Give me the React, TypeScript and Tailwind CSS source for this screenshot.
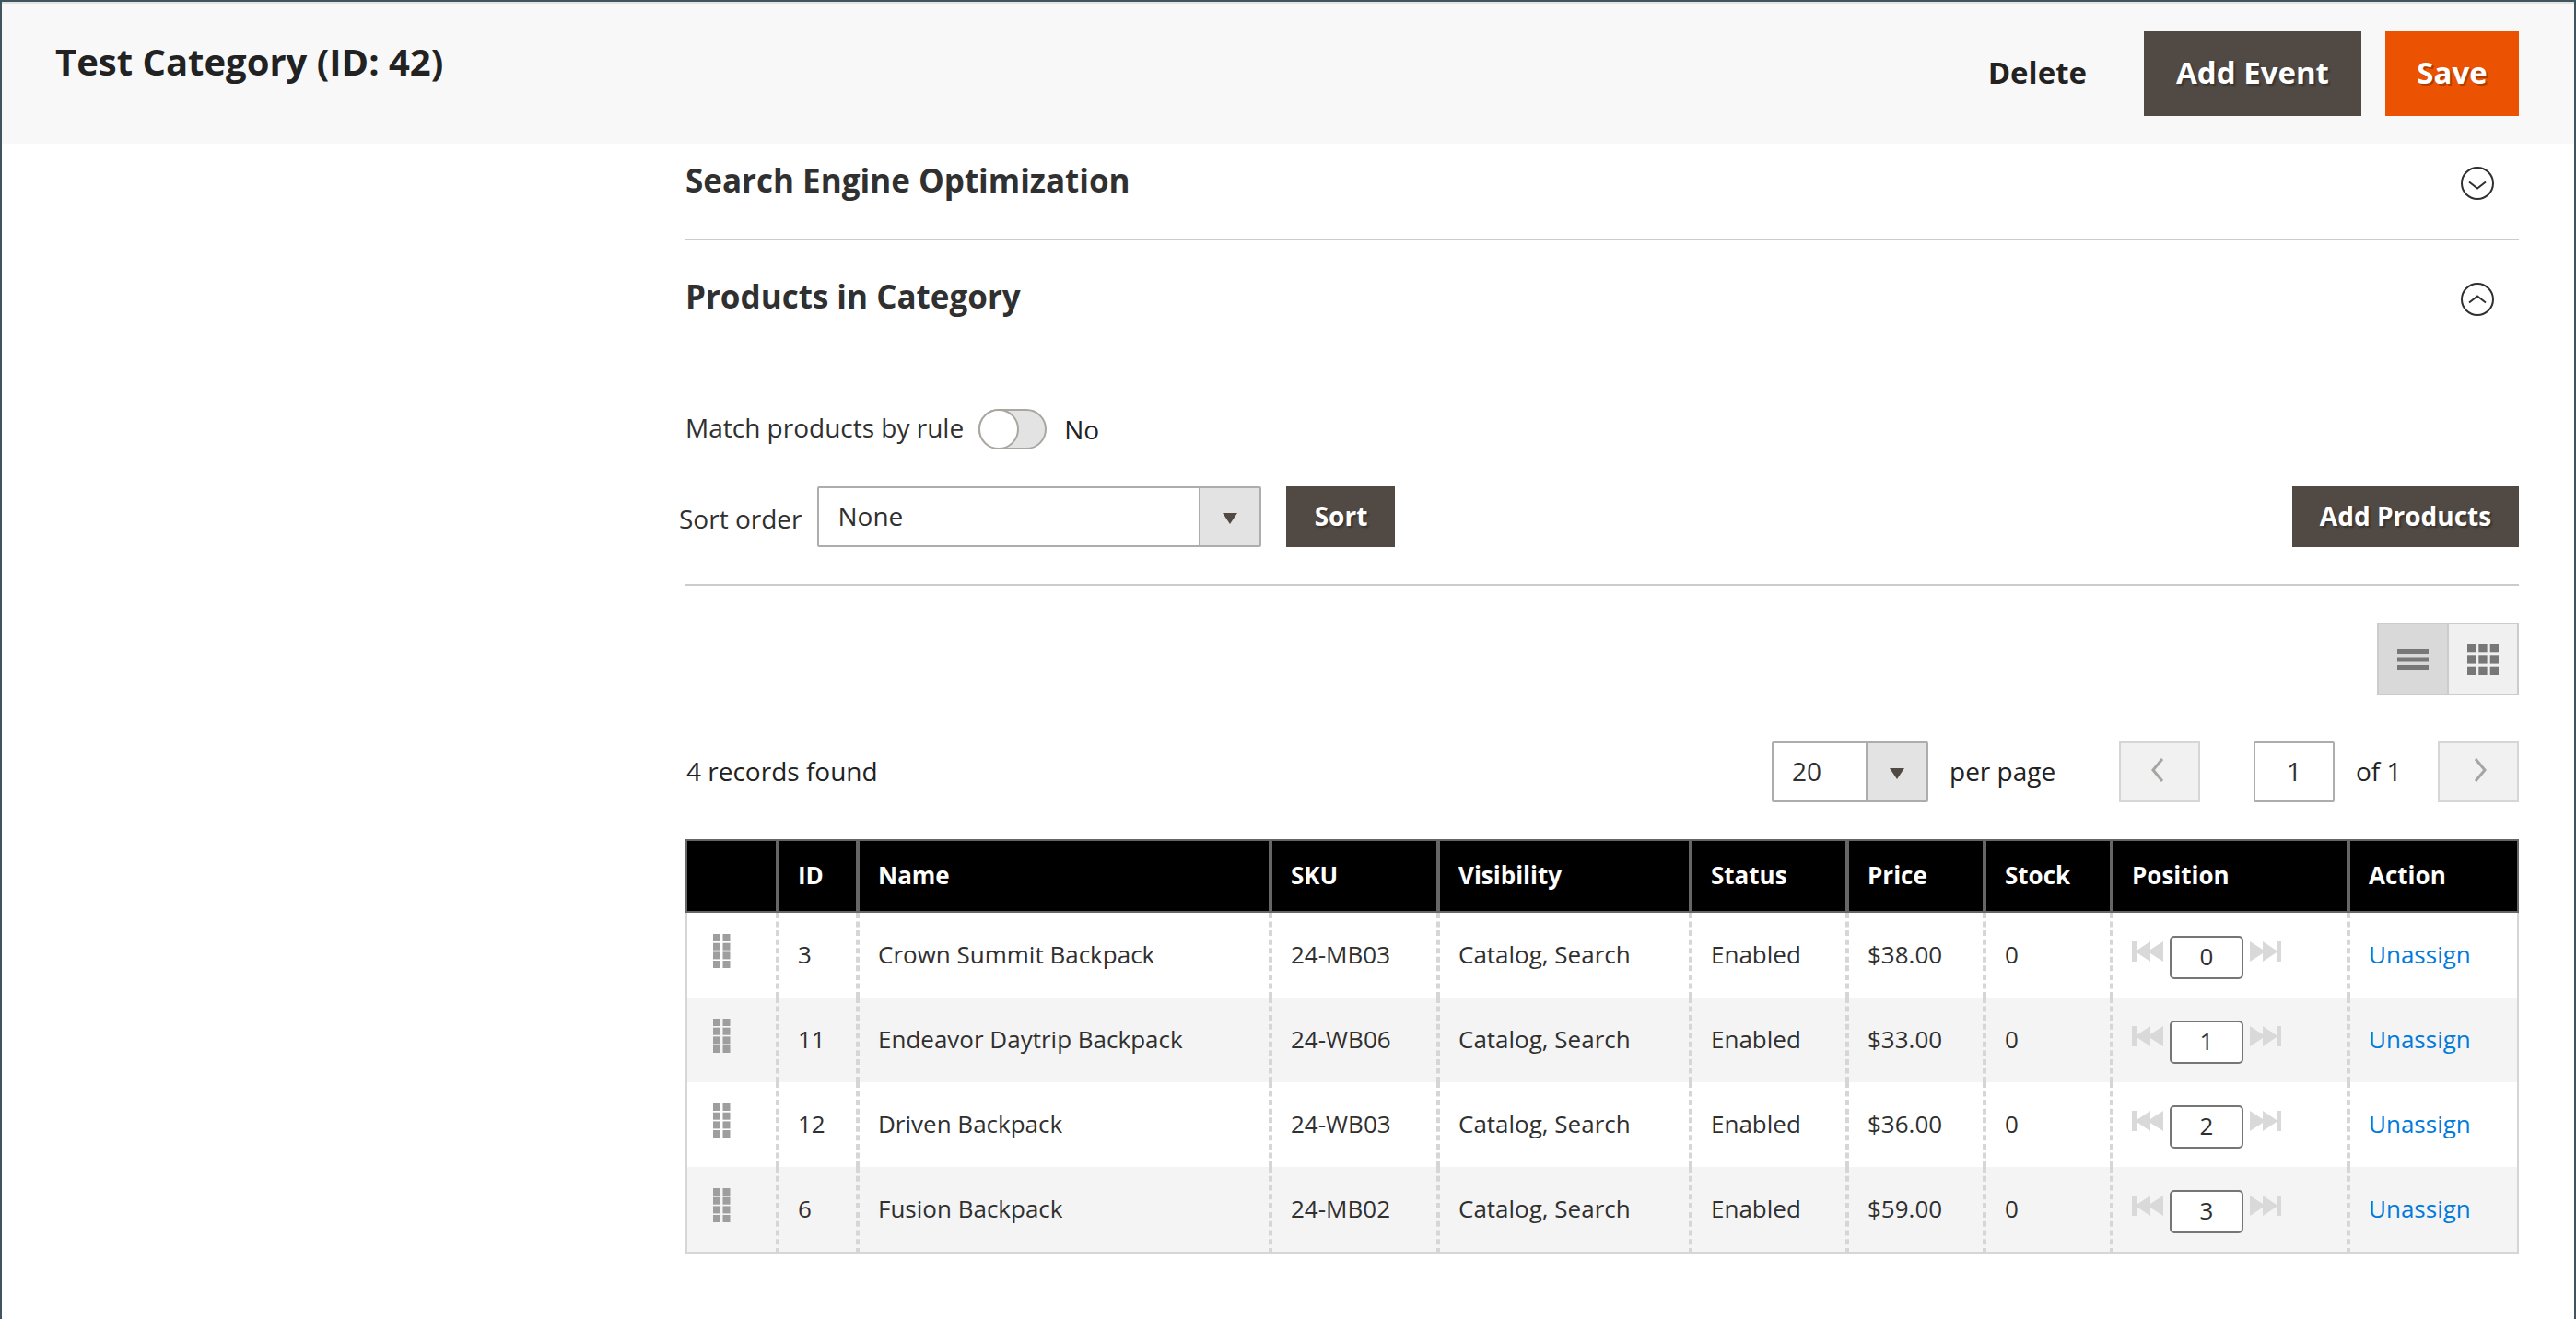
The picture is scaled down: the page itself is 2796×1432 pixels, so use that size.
import React, { useState } from "react";

const products = [
  { id: 3, name: "Crown Summit Backpack", sku: "24-MB03", price: "$38.00" },
  { id: 11, name: "Endeavor Daytrip Backpack", sku: "24-WB06", price: "$33.00" },
  { id: 12, name: "Driven Backpack", sku: "24-WB03", price: "$36.00" },
  { id: 6, name: "Fusion Backpack", sku: "24-MB02", price: "$59.00" },
];

const columns = [
  { label: "", width: "w-[100px]" },
  { label: "ID", width: "w-[87px]" },
  { label: "Name", width: "w-auto" },
  { label: "SKU", width: "w-[182px]" },
  { label: "Visibility", width: "w-[274px]" },
  { label: "Status", width: "w-[170px]" },
  { label: "Price", width: "w-[149px]" },
  { label: "Stock", width: "w-[138px]" },
  { label: "Position", width: "w-[257px]" },
  { label: "Action", width: "w-[185px]" },
];

const cell =
  "h-[92px] border-x-2 border-dashed border-[#d6d6d6] px-5 pb-0.5 first:[border-left-style:solid] last:[border-right-style:solid]";

function CircleChevron({ up = false }: { up?: boolean }) {
  return (
    <svg className="size-9 shrink-0" viewBox="0 0 36 36" fill="none" stroke="#303030" strokeWidth="2" aria-hidden="true">
      <circle cx="18" cy="18" r="17" />
      {up ? <path d="M9 21.5 18 14.5l9 7" /> : <path d="M9 16.5l9 7 9-7" />}
    </svg>
  );
}

function SectionTitle({ title, open = false }: { title: string; open?: boolean }) {
  return (
    <h2>
      <button type="button" aria-expanded={open} className="flex w-full items-center justify-between pr-[27px] text-left text-[35px] leading-9 font-bold text-[#303030]">
        <span className="-mt-1.5">{title}</span>
        <CircleChevron up={open} />
      </button>
    </h2>
  );
}

function SelectBox({ id, label, options, className, arrow }: { id: string; label: string; options: string[]; className: string; arrow: string }) {
  return (
    <div className={`relative ${className}`}>
      <select id={id} aria-label={label} className="h-[66px] w-full appearance-none rounded-[2px] border-2 border-[#adadad] bg-white pb-0.5 pl-5 text-[28px] text-[#303030]">
        {options.map((o) => (
          <option key={o}>{o}</option>
        ))}
      </select>
      <span className={`pointer-events-none absolute inset-y-0.5 right-0.5 flex items-center justify-center border-l-2 border-[#adadad] bg-[#e3e3e3] ${arrow}`}>
        <svg className="mt-1 h-3 w-4" viewBox="0 0 16 12" aria-hidden="true">
          <path d="M0 0h16L8 12z" fill="#514943" />
        </svg>
      </span>
    </div>
  );
}

function DarkButton({ children, className }: { children: React.ReactNode; className: string }) {
  return (
    <button type="button" className={`flex items-center justify-center bg-[#514943] pb-0.5 font-bold text-white [text-shadow:2px_2px_2px_rgba(0,0,0,0.3)] ${className}`}>
      {children}
    </button>
  );
}

function PagerButton({ label, d, className }: { label: string; d: string; className: string }) {
  return (
    <button type="button" disabled aria-label={label} className={`flex h-[66px] w-22 items-center justify-center border-2 border-[#d6d6d6] bg-[#f1f1f1] pb-1 ${className}`}>
      <svg className="h-[26px] w-4" viewBox="0 0 16 26" fill="none" stroke="#a8a4a1" strokeWidth="3" aria-hidden="true">
        <path d={d} />
      </svg>
    </button>
  );
}

function Grip() {
  return (
    <svg className="h-[37px] w-[19px]" viewBox="0 0 19 37" fill="#9e9e9e" aria-hidden="true">
      {[0, 9.7, 19.4, 29].map((y) =>
        [0, 10.5].map((x) => <rect key={`${x}-${y}`} x={x} y={y} width="8" height="8" />)
      )}
    </svg>
  );
}

function SkipIcon({ forward = false }: { forward?: boolean }) {
  return (
    <svg className="h-[22px] w-[34px]" viewBox="0 0 34 22" fill="#d9d9d9" aria-hidden="true">
      {forward ? (
        <path d="M0 0l14 9V0l15 10V0h5v22h-5V12L14 22v-9L0 22z" />
      ) : (
        <path d="M34 0L20 9V0L5 10V0H0v22h5V12l15 10v-9l14 9z" />
      )}
    </svg>
  );
}

export default function App() {
  const [match, setMatch] = useState(false);
  const [positions, setPositions] = useState(["0", "1", "2", "3"]);

  return (
    <div className="min-h-screen border-x-2 border-t-2 border-[#41555f] bg-white font-['Open_Sans',sans-serif] text-[28px] leading-[38px] text-[#303030]">
      <header className="flex h-[154px] items-start justify-between border-t-2 border-[#e3e5e4] bg-[#f8f8f8] pr-[60px] pl-[58px]">
        <h1 className="mt-9 text-[40px] leading-[54px] font-bold text-[#222]">Test Category (ID: 42)</h1>
        <div className="mt-[30px] flex h-[92px] text-[33px]">
          <button type="button" className="mr-[26px] px-9 pb-0.5 font-bold text-[#222]">
            Delete
          </button>
          <DarkButton className="mr-[26px] w-[236px]">Add Event</DarkButton>
          <button type="button" className="w-[145px] bg-[#eb5202] pb-0.5 font-bold text-white [text-shadow:2px_2px_0_rgba(0,0,0,0.25)]">
            Save
          </button>
        </div>
      </header>

      <main className="pr-[60px] pl-[742px]">
        <section className="border-b-2 border-[#ccc] pt-[25px] pb-[42px]">
          <SectionTitle title="Search Engine Optimization" />
        </section>

        <section className="pt-[46px]">
          <SectionTitle title="Products in Category" open />

          <div className="mt-[100px] flex h-[46px] items-center">
            <label htmlFor="match-rule" className="pb-1">Match products by rule</label>
            <span className="relative ml-4 h-11 w-[74px]">
              <input
                id="match-rule"
                type="checkbox"
                role="switch"
                checked={match}
                onChange={(e) => setMatch(e.target.checked)}
                className="peer h-11 w-[74px] appearance-none rounded-full border-2 border-[#aaa6a0] bg-[#e3e3e3]"
              />
              <span className="pointer-events-none absolute top-0 left-0 size-11 rounded-full border-2 border-[#aaa6a0] bg-white peer-checked:left-[30px]" />
            </span>
            <span className="ml-[19px] text-[#222]">{match ? "Yes" : "No"}</span>
          </div>

          <div className="mt-[39px] flex items-center border-b-2 border-[#ccc] pb-10">
            <label htmlFor="sort-order" className="-ml-[7px] pt-1">
              Sort order
            </label>
            <SelectBox id="sort-order" label="Sort order" options={["None"]} className="ml-[17px] w-[482px]" arrow="w-[66px]" />
            <DarkButton className="ml-[27px] h-[66px] w-[118px]">Sort</DarkButton>
            <DarkButton className="ml-auto h-[66px] w-[246px]">Add Products</DarkButton>
          </div>

          <div className="mt-10 ml-auto flex h-[79px] w-[154px] border-2 border-[#ccc]">
            <button type="button" aria-label="List view" aria-pressed="true" className="flex w-[76px] items-center justify-center border-r-2 border-[#ccc] bg-[#d9d9d9]">
              <svg className="h-[22px] w-[34px]" viewBox="0 0 34 22" fill="#777" aria-hidden="true">
                <path d="M0 0h34v5H0zM0 8.5h34v5H0zM0 17h34v5H0z" />
              </svg>
            </button>
            <button type="button" aria-label="Grid view" aria-pressed="false" className="flex grow items-center justify-center bg-[#f0f0f0]">
              <svg className="size-[34px]" viewBox="0 0 34 34" fill="#777" aria-hidden="true">
                {[0, 12.3, 24.7].map((y) =>
                  [0, 12.3, 24.7].map((x) => <rect key={`${x}-${y}`} x={x} y={y} width="9.3" height="9.3" />)
                )}
              </svg>
            </button>
          </div>

          <div className="mt-[50px] flex items-center text-[#222]">
            <span className="grow pb-0.5 pl-px">4 records found</span>
            <SelectBox id="page-size" label="Records per page" options={["20"]} className="w-[170px]" arrow="w-[66px]" />
            <label htmlFor="page-size" className="ml-[23px] w-[184px] pb-0.5">
              per page
            </label>
            <PagerButton label="Previous page" d="M13 1L3 13l10 12" className="pr-1" />
            <input aria-label="Page" defaultValue="1" className="ml-[58px] h-[66px] w-22 rounded-[2px] border-2 border-[#adadad] pb-0.5 text-center text-[#303030]" />
            <span className="ml-[23px] w-[89px] pb-0.5">of 1</span>
            <PagerButton label="Next page" d="M3 1l10 12L3 25" className="pl-1" />
          </div>

          <table className="mt-10 w-full table-fixed border-separate border-spacing-0 text-left text-[26px] leading-9">
            <colgroup>
              {columns.map((c) => (
                <col key={c.label} className={c.width} />
              ))}
            </colgroup>
            <thead>
              <tr>
                {columns.map((c) => (
                  <th key={c.label} scope="col" aria-label={c.label || "Reorder"} className="h-20 border-2 border-[#666] bg-black px-5 pb-0.5 font-bold text-white">
                    {c.label}
                  </th>
                ))}
              </tr>
            </thead>
            <tbody className="[&>tr:last-child>td]:h-[94px] [&>tr:last-child>td]:border-b-2 [&>tr:last-child>td]:[border-bottom-style:solid]">
              {products.map((p, i) => (
                <tr key={p.id} className="even:bg-[#f4f4f4]">
                  <td className={cell}>
                    <div className="pb-2 pl-2">
                      <Grip />
                    </div>
                  </td>
                  <td className={cell}>{p.id}</td>
                  <td className={cell}>{p.name}</td>
                  <td className={cell}>{p.sku}</td>
                  <td className={cell}>Catalog, Search</td>
                  <td className={cell}>Enabled</td>
                  <td className={cell}>{p.price}</td>
                  <td className={cell}>0</td>
                  <td className={cell}>
                    <div className="flex items-start pt-1.5">
                      <button type="button" aria-label="Move to top" className="mt-1.5">
                        <SkipIcon />
                      </button>
                      <input
                        aria-label={`Position of ${p.name}`}
                        value={positions[i]}
                        onChange={(e) => setPositions(positions.map((v, j) => (j === i ? e.target.value : v)))}
                        className="mx-[7px] h-[47px] w-20 rounded-[5px] border-2 border-[#767676] bg-white pb-0.5 text-center"
                      />
                      <button type="button" aria-label="Move to bottom" className="mt-1.5">
                        <SkipIcon forward />
                      </button>
                    </div>
                  </td>
                  <td className={cell}>
                    <a href="#unassign" className="text-[#007bdb]">
                      Unassign
                    </a>
                  </td>
                </tr>
              ))}
            </tbody>
          </table>
        </section>
      </main>
    </div>
  );
}
